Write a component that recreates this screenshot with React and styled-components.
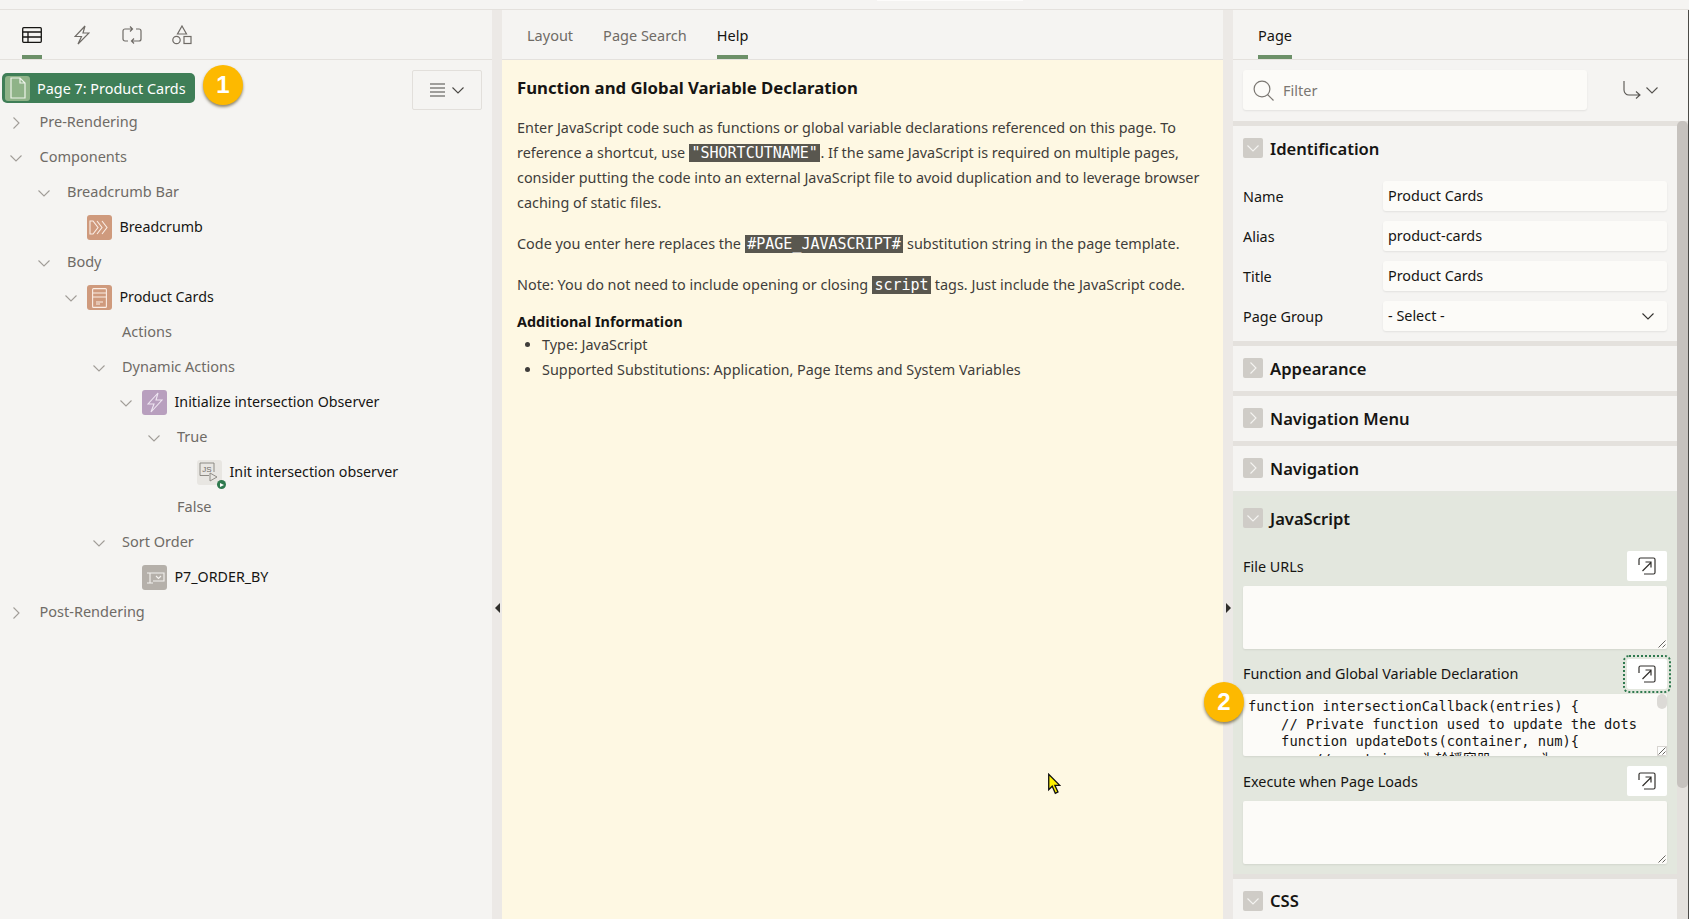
import React from "react";
import styled, { createGlobalStyle } from "styled-components";

const GlobalStyle = createGlobalStyle`
  html, body { margin: 0; padding: 0; height: 100%; overflow: hidden; }
  body { background: #f5f4f2; font-family: "Noto Sans", "Liberation Sans", sans-serif; font-size: 14px; color: #161513; }
  * { box-sizing: border-box; }
`;

const Page = styled.div`
  position: relative;
  width: 1689px;
  height: 919px;
  display: flex;
  flex-direction: column;
  overflow: hidden;
`;

const TopStrip = styled.div`
  height: 10px;
  flex: none;
  padding-left: 877px;
  border-bottom: 1px solid #e4e1dd;
`;

const TopNub = styled.div`
  width: 146px;
  height: 1px;
  background: #fdfcfb;
`;

const Columns = styled.div`
  flex: 1;
  min-height: 0;
  display: flex;
`;

const Panel = styled.section`
  flex: none;
  width: ${(p) => p.$width}px;
  display: flex;
  flex-direction: column;
  min-height: 0;
`;

const RightPanel = styled(Panel)`
  border-right: 1px solid #4b4a47;
`;

const Splitter = styled.div`
  flex: none;
  width: 10px;
  padding-top: 593px;
  background: #ece9e6;
  display: flex;
  justify-content: center;
`;

const SplitArrow = styled.div`
  width: 0;
  height: 0;
  border-top: 5px solid transparent;
  border-bottom: 5px solid transparent;
  ${(p) => (p.$dir === "left" ? "border-right: 5px solid #2f2e2b;" : "border-left: 5px solid #2f2e2b;")}
`;

const TabBar = styled.div`
  flex: none;
  height: 50px;
  display: flex;
  align-items: stretch;
  gap: ${(p) => p.$gap || 30}px;
  padding-left: ${(p) => p.$left || 25}px;
  border-bottom: 1px solid #e4e1dd;
`;

const Tab = styled.div`
  display: flex;
  align-items: center;
  justify-content: center;
  width: ${(p) => (p.$width ? `${p.$width}px` : "auto")};
  padding-top: 5px;
  font-size: 14.5px;
  color: ${(p) => (p.$active ? "#161513" : "#6f6b66")};
  border-bottom: 4px solid ${(p) => (p.$active ? "#6c9068" : "transparent")};
`;

const RootRow = styled.div`
  flex: none;
  height: 45px;
  display: flex;
  align-items: flex-start;
  padding: 10px 10px 0 2px;
`;

const RootBar = styled.div`
  margin-top: 3px;
  width: 193px;
  height: 30px;
  display: flex;
  align-items: center;
  gap: 7px;
  padding-left: 3px;
  border-radius: 5px;
  background: #3f7e57;
  color: #fff;
  font-size: 14.4px;
  white-space: nowrap;
`;

const RootIcon = styled.span`
  width: 25px;
  height: 25px;
  display: flex;
  align-items: center;
  justify-content: center;
  border-radius: 3px;
  background: #8fb388;
`;

const Badge = styled.div`
  flex: none;
  width: 40px;
  height: 40px;
  border-radius: 50%;
  display: flex;
  align-items: center;
  justify-content: center;
  background: #fdb900;
  color: #fff;
  font-family: "Liberation Sans", sans-serif;
  font-size: 24px;
  font-weight: 700;
  box-shadow: 0 2px 3px rgba(60, 45, 0, 0.55);
`;

const RootBadge = styled(Badge)`
  margin: -5px 0 0 8px;
`;

const FloatBadge = styled(Badge)`
  position: absolute;
  left: 1204px;
  top: 682px;
  z-index: 3;
`;

const MenuButton = styled.div`
  margin-left: auto;
  width: 70px;
  height: 40px;
  display: flex;
  align-items: center;
  justify-content: center;
  gap: 7px;
  border: 1px solid #e2dfdb;
  border-radius: 2px;
  position: relative;
  z-index: 1;
`;

const Tree = styled.div`
  display: flex;
  flex-direction: column;
`;

const TreeRow = styled.div`
  height: 35px;
  display: flex;
  align-items: center;
  padding-left: ${(p) => 10 + 27.5 * p.$level}px;
  white-space: nowrap;
`;

const Twisty = styled.span`
  flex: none;
  width: 12px;
  height: 12px;
  display: flex;
`;

const TreeLabel = styled.span`
  margin-left: 17.5px;
  padding-bottom: 3px;
  color: #6f6b66;
  font-size: 14.5px;
`;

const NodeIcon = styled.span`
  flex: none;
  position: relative;
  margin-left: 10px;
  width: 25px;
  height: 25px;
  border-radius: 3px;
  display: flex;
  align-items: center;
  justify-content: center;
  background: ${(p) => p.$bg};
`;

const NodeLabel = styled.span`
  margin-left: 7.5px;
  padding-bottom: 3px;
  color: #161513;
  font-size: 14.25px;
`;

const RunDot = styled.span`
  position: absolute;
  right: -4px;
  bottom: -4px;
  width: 9px;
  height: 9px;
  border-radius: 50%;
  background: #2f7a4f;
  display: flex;
  align-items: center;
  justify-content: center;
  &::after {
    content: "";
    margin-left: 1px;
    border-left: 4px solid #fff;
    border-top: 2.5px solid transparent;
    border-bottom: 2.5px solid transparent;
  }
`;

const HelpBody = styled.div`
  flex: 1;
  padding: 16px 15px 0;
  background: #fef8e3;
  color: #3f3d3a;
  font-size: 14.4px;
  line-height: 25.3px;
`;

const HelpTitle = styled.h1`
  margin: 0 0 14.5px;
  color: #161513;
  font-size: 16.75px;
  font-weight: 700;
  line-height: 24px;
`;

const HelpText = styled.p`
  margin: 0 0 15.5px;
`;

const Kw = styled.code`
  display: inline-block;
  padding: 0 2.5px;
  height: 18px;
  line-height: 18px;
  background: #59574f;
  color: #fff;
  font-family: "DejaVu Sans Mono", "Liberation Mono", monospace;
  font-size: 15px;
`;

const HelpSub = styled.div`
  margin-top: -2px;
  color: #161513;
  font-weight: 700;
  line-height: 22px;
`;

const HelpList = styled.ul`
  margin: 0;
  padding-left: 25px;
  line-height: 24.8px;
`;

const FilterRow = styled.div`
  flex: none;
  height: 61px;
  display: flex;
  align-items: flex-start;
  padding: 10px 0 0 10px;
`;

const FilterBox = styled.div`
  width: 344px;
  height: 40px;
  display: flex;
  align-items: center;
  gap: 9px;
  padding-left: 10px;
  border-radius: 3px;
  background: #fcfbf8;
  box-shadow: 0 1px 2px rgba(0, 0, 0, 0.08);
  color: #7b7772;
  font-size: 14.5px;
`;

const RouteButton = styled.div`
  margin-left: 36px;
  height: 40px;
  display: flex;
  align-items: center;
  gap: 5px;
`;

const PropScroll = styled.div`
  flex: 1;
  min-height: 0;
  display: flex;
  overflow: hidden;
`;

const Sections = styled.div`
  flex: 1;
  min-width: 0;
`;

const ScrollTrack = styled.div`
  flex: none;
  width: 11px;
  background: #e4e1dd;
`;

const ScrollThumb = styled.div`
  height: 667px;
  border-radius: 5px;
  background: #c6c2be;
`;

const Group = styled.div`
  border-top: 5px solid ${(p) => (p.$on ? "#e4e6df" : "#e4e1dd")};
  background: ${(p) => (p.$on ? "#e3e7de" : "#f5f4f2")};
`;

const GroupHead = styled.div`
  height: 45px;
  display: flex;
  align-items: center;
  gap: 7px;
  padding-left: 10px;
  padding-bottom: 1px;
  font-size: 16.6px;
  font-weight: 600;
`;

const Toggle = styled.span`
  width: 20px;
  height: 20px;
  border-radius: 2px;
  background: #cfccc7;
  display: flex;
  align-items: center;
  justify-content: center;
`;

const GroupBody = styled.div`
  padding: 10px 10px 10px;
  display: flex;
  flex-direction: column;
  gap: ${(p) => p.$gap}px;
`;

const FieldRow = styled.div`
  height: 30px;
  display: grid;
  grid-template-columns: 140px 1fr;
  align-items: center;
  font-size: 14.4px;
`;

const FieldValue = styled.div`
  height: 30px;
  display: flex;
  align-items: center;
  justify-content: space-between;
  padding: 0 13px 1px 5px;
  border-radius: 3px;
  background: #fcfbf8;
  box-shadow: 0 1px 2px rgba(0, 0, 0, 0.08);
`;

const CodeField = styled.div`
  display: flex;
  flex-direction: column;
  gap: 5px;
`;

const CodeHead = styled.div`
  height: 30px;
  display: flex;
  align-items: center;
  justify-content: space-between;
  font-size: 14.4px;
`;

const ExpandButton = styled.div`
  position: relative;
  width: 40px;
  height: 30px;
  display: flex;
  align-items: center;
  justify-content: center;
  border-radius: 2px;
  background: #fff;
  ${(p) => p.$focus && "outline: 2px dotted #2f7a4f; outline-offset: 2px;"}
`;

const TextBox = styled.div`
  position: relative;
  height: 62.6px;
  overflow: hidden;
  border-radius: 2px;
  background: #fcfbf8;
  box-shadow: 0 1px 2px rgba(0, 0, 0, 0.08);
`;

const CodeText = styled.pre`
  margin: 0;
  padding: 4.5px 5px;
  font-family: "DejaVu Sans Mono", "Noto Sans CJK SC", monospace;
  font-size: 13.75px;
  line-height: 17.67px;
  color: #161513;
`;

const Grip = styled.svg`
  position: absolute;
  right: 1px;
  bottom: 1px;
`;

const GripBox = styled.span`
  position: absolute;
  right: 0;
  bottom: 0;
  width: 10px;
  height: 10px;
  background: #fdfdfc;
  border: 1px solid #d8d5d1;
`;

const CodeThumb = styled.span`
  position: absolute;
  right: 0;
  top: 0;
  width: 10px;
  height: 15px;
  border-radius: 5px;
  background: #dcdad6;
`;

const Cursor = styled.svg`
  position: absolute;
  left: 1047px;
  top: 773px;
  z-index: 4;
`;

const Chevron = ({ dir = "down", color = "#a19d98", size = 12 }) => (
  <svg width={size} height={size} viewBox="0 0 12 12" fill="none" stroke={color} strokeWidth="1.1">
    {dir === "down" ? <path d="M0.5 3.5 6 9l5.5-5.5" /> : <path d="M3.5 0.5 9 6l-5.5 5.5" />}
  </svg>
);

const ExpandIcon = () => (
  <svg width="18" height="18" viewBox="0 0 18 18" fill="none" stroke="#33312e" strokeWidth="1.2">
    <path d="M1 8V2.5A1.5 1.5 0 0 1 2.5 1h13A1.5 1.5 0 0 1 17 2.5v13a1.5 1.5 0 0 1-1.5 1.5H6" />
    <path d="M4.5 14 13 5.5M7.5 5H13v5.5" />
  </svg>
);

const GripLines = () => (
  <Grip width="8" height="8" viewBox="0 0 8 8" fill="none" stroke="#55534f" strokeWidth="0.9">
    <path d="M0.5 7.5l7-7M4.5 7.5l3-3" />
  </Grip>
);

const TreeIcons = {
  page: (
    <svg width="16" height="22" viewBox="0 0 16 22" fill="none" stroke="#eef3ea" strokeWidth="1.2">
      <path d="M1 1h9l5 5v15H1zM10 1v5h5" />
    </svg>
  ),
  breadcrumb: (
    <svg width="21" height="15" viewBox="0 0 21 15" fill="none" stroke="#fbeee6" strokeWidth="1.1">
      <path d="M1 1h3l5 6.500L4 14H1zM8 1l5 6.500L8 14M13 1l5 6.500L13 14" />
    </svg>
  ),
  region: (
    <svg width="15" height="20" viewBox="0 0 15 20" fill="none" stroke="#fbeee6" strokeWidth="1.1">
      <rect x="0.6" y="0.6" width="13.8" height="18.8" rx="1" />
      <path d="M1 5h13M1 9h13M4 14h7M4 16h4" />
    </svg>
  ),
  bolt: (
    <svg width="16" height="21" viewBox="0 0 16 21" fill="none" stroke="#efe6f2" strokeWidth="1.1">
      <path d="M11 1 1 12h6l-3 8 11-12H9z" />
    </svg>
  ),
  js: (
    <svg width="21" height="21" viewBox="0 0 21 21" fill="none" stroke="#85817c" strokeWidth="0.9">
      <path d="M10 13.500H1V1h14v9" />
      <path d="M11 11v8l7-4z" />
      <text x="3.2" y="10" fontSize="8" fill="#6f6b66" stroke="none" fontFamily="Liberation Sans">JS</text>
    </svg>
  ),
  select: (
    <svg width="20" height="14" viewBox="0 0 20 14" fill="none" stroke="#f4f2ef" strokeWidth="1.1">
      <path d="M2 2h6M2 12h6M5 2v10M8 2h11v8H8" />
      <path d="M11 5l2.500 2.500L16 5" />
    </svg>
  ),
};

const tree = [
  { level: 0, twisty: "right", label: "Pre-Rendering" },
  { level: 0, twisty: "down", label: "Components" },
  { level: 1, twisty: "down", label: "Breadcrumb Bar" },
  { level: 2, icon: "breadcrumb", bg: "#cf9a7d", node: "Breadcrumb" },
  { level: 1, twisty: "down", label: "Body" },
  { level: 2, twisty: "down", icon: "region", bg: "#cf9a7d", node: "Product Cards" },
  { level: 3, label: "Actions" },
  { level: 3, twisty: "down", label: "Dynamic Actions" },
  { level: 4, twisty: "down", icon: "bolt", bg: "#b89fbe", node: "Initialize intersection Observer" },
  { level: 5, twisty: "down", label: "True" },
  { level: 6, icon: "js", bg: "#e8e6e2", node: "Init intersection observer", run: true },
  { level: 5, label: "False" },
  { level: 3, twisty: "down", label: "Sort Order" },
  { level: 4, icon: "select", bg: "#b5b0aa", node: "P7_ORDER_BY" },
  { level: 0, twisty: "right", label: "Post-Rendering" },
];

const codeSample = `function intersectionCallback(entries) {
    // Private function used to update the dots
    function updateDots(container, num){
        // container 为轮播容器, num 为`;

const LeftPanel = () => (
  <Panel $width={492}>
    <TabBar $gap={30} $left={22}>
      <Tab $active $width={20}>
        <svg width="20" height="16" viewBox="0 0 20 16" fill="none" stroke="#161513" strokeWidth="1.3">
          <rect x="0.7" y="0.7" width="18.6" height="14.6" rx="1" />
          <path d="M1 5h18M1 10h18M6 5v10" />
        </svg>
      </Tab>
      <Tab $width={20}>
        <svg width="16" height="20" viewBox="0 0 16 20" fill="none" stroke="#6f6b66" strokeWidth="1.2">
          <path d="M11 1 1 11.500h6.500L4 19l11-11H9z" />
        </svg>
      </Tab>
      <Tab $width={20}>
        <svg width="20" height="20" viewBox="0 0 20 20" fill="none" stroke="#6f6b66" strokeWidth="1.2">
          <path d="M6 16H3a2 2 0 0 1-2-2V6a2 2 0 0 1 2-2h7M8 1.500l2.500 2.500L8 6.500" />
          <path d="M14 4h3a2 2 0 0 1 2 2v8a2 2 0 0 1-2 2h-7M12 13.500 9.500 16l2.500 2.500" />
        </svg>
      </Tab>
      <Tab $width={20}>
        <svg width="20" height="20" viewBox="0 0 20 20" fill="none" stroke="#6f6b66" strokeWidth="1.2">
          <path d="M10 1l4.500 8h-9z" />
          <circle cx="4.500" cy="15" r="3.700" />
          <rect x="12" y="11.500" width="7" height="7" />
        </svg>
      </Tab>
    </TabBar>
    <RootRow>
      <RootBar>
        <RootIcon>{TreeIcons.page}</RootIcon>
        Page 7: Product Cards
      </RootBar>
      <RootBadge>1</RootBadge>
      <MenuButton>
        <svg width="15" height="14" viewBox="0 0 15 14" fill="none" stroke="#4a4844" strokeWidth="1.1">
          <path d="M0 1h15M0 5h15M0 9h15M0 13h15" />
        </svg>
        <Chevron color="#4a4844" />
      </MenuButton>
    </RootRow>
    <Tree>
      {tree.map((row) => (
        <TreeRow key={row.label || row.node} $level={row.level}>
          <Twisty>{row.twisty && <Chevron dir={row.twisty} />}</Twisty>
          {row.label && <TreeLabel>{row.label}</TreeLabel>}
          {row.icon && (
            <NodeIcon $bg={row.bg}>
              {TreeIcons[row.icon]}
              {row.run && <RunDot />}
            </NodeIcon>
          )}
          {row.node && <NodeLabel>{row.node}</NodeLabel>}
        </TreeRow>
      ))}
    </Tree>
  </Panel>
);

const HelpPanel = () => (
  <Panel $width={721}>
    <TabBar $gap={30}>
      <Tab>Layout</Tab>
      <Tab>Page Search</Tab>
      <Tab $active>Help</Tab>
    </TabBar>
    <HelpBody>
      <HelpTitle>Function and Global Variable Declaration</HelpTitle>
      <HelpText>
        Enter JavaScript code such as functions or global variable declarations referenced on this page. To reference a
        shortcut, use <Kw>"SHORTCUTNAME"</Kw>. If the same JavaScript is required on multiple pages, consider putting
        the code into an external JavaScript file to avoid duplication and to leverage browser caching of static files.
      </HelpText>
      <HelpText>
        Code you enter here replaces the <Kw>#PAGE_JAVASCRIPT#</Kw> substitution string in the page template.
      </HelpText>
      <HelpText>
        Note: You do not need to include opening or closing <Kw>script</Kw> tags. Just include the JavaScript code.
      </HelpText>
      <HelpSub>Additional Information</HelpSub>
      <HelpList>
        <li>Type: JavaScript</li>
        <li>Supported Substitutions: Application, Page Items and System Variables</li>
      </HelpList>
    </HelpBody>
  </Panel>
);

const CollapsedGroup = ({ title }) => (
  <Group>
    <GroupHead>
      <Toggle>
        <Chevron dir="right" color="#f5f4f2" />
      </Toggle>
      {title}
    </GroupHead>
  </Group>
);

const PropertyPanel = () => (
  <RightPanel $width={456}>
    <TabBar $left={25}>
      <Tab $active>Page</Tab>
    </TabBar>
    <FilterRow>
      <FilterBox>
        <svg width="21" height="21" viewBox="0 0 21 21" fill="none" stroke="#7b7772" strokeWidth="1.2">
          <circle cx="9" cy="9" r="7.900" />
          <path d="M14.500 14.500 20.500 20.500" />
        </svg>
        Filter
      </FilterBox>
      <RouteButton>
        <svg width="18" height="18" viewBox="0 0 18 18" fill="none" stroke="#55534f" strokeWidth="1.1">
          <path d="M1 0v9a5 5 0 0 0 5 5h11M13 10.500l4 3.500-4 3.500" />
        </svg>
        <Chevron color="#55534f" />
      </RouteButton>
    </FilterRow>
    <PropScroll>
      <Sections>
        <Group>
          <GroupHead>
            <Toggle>
              <Chevron color="#f5f4f2" />
            </Toggle>
            Identification
          </GroupHead>
          <GroupBody $gap={10}>
            <FieldRow>
              Name
              <FieldValue>Product Cards</FieldValue>
            </FieldRow>
            <FieldRow>
              Alias
              <FieldValue>product-cards</FieldValue>
            </FieldRow>
            <FieldRow>
              Title
              <FieldValue>Product Cards</FieldValue>
            </FieldRow>
            <FieldRow>
              Page Group
              <FieldValue>
                - Select -
                <Chevron color="#33312e" />
              </FieldValue>
            </FieldRow>
          </GroupBody>
        </Group>
        <CollapsedGroup title="Appearance" />
        <CollapsedGroup title="Navigation Menu" />
        <CollapsedGroup title="Navigation" />
        <Group $on>
          <GroupHead>
            <Toggle>
              <Chevron color="#f5f4f2" />
            </Toggle>
            JavaScript
          </GroupHead>
          <GroupBody $gap={10}>
            <CodeField>
              <CodeHead>
                File URLs
                <ExpandButton>
                  <ExpandIcon />
                </ExpandButton>
              </CodeHead>
              <TextBox>
                <GripLines />
              </TextBox>
            </CodeField>
            <CodeField>
              <CodeHead>
                Function and Global Variable Declaration
                <ExpandButton $focus>
                  <ExpandIcon />
                </ExpandButton>
              </CodeHead>
              <TextBox>
                <CodeText>{codeSample}</CodeText>
                <CodeThumb />
                <GripBox />
                <GripLines />
              </TextBox>
            </CodeField>
            <CodeField>
              <CodeHead>
                Execute when Page Loads
                <ExpandButton>
                  <ExpandIcon />
                </ExpandButton>
              </CodeHead>
              <TextBox>
                <GripLines />
              </TextBox>
            </CodeField>
          </GroupBody>
        </Group>
        <Group>
          <GroupHead>
            <Toggle>
              <Chevron color="#f5f4f2" />
            </Toggle>
            CSS
          </GroupHead>
        </Group>
      </Sections>
      <ScrollTrack>
        <ScrollThumb />
      </ScrollTrack>
    </PropScroll>
  </RightPanel>
);

export default function App() {
  return (
    <Page>
      <GlobalStyle />
      <TopStrip>
        <TopNub />
      </TopStrip>
      <Columns>
        <LeftPanel />
        <Splitter>
          <SplitArrow $dir="left" />
        </Splitter>
        <HelpPanel />
        <Splitter>
          <SplitArrow $dir="right" />
        </Splitter>
        <PropertyPanel />
      </Columns>
      <FloatBadge>2</FloatBadge>
      <Cursor width="14" height="22" viewBox="0 0 15 25">
        <path d="M1.500 1.500V19l4-4 3.500 8 3-1.500-3.500-7.500h5.500z" fill="#fff200" stroke="#111" strokeWidth="1.500" />
      </Cursor>
    </Page>
  );
}
